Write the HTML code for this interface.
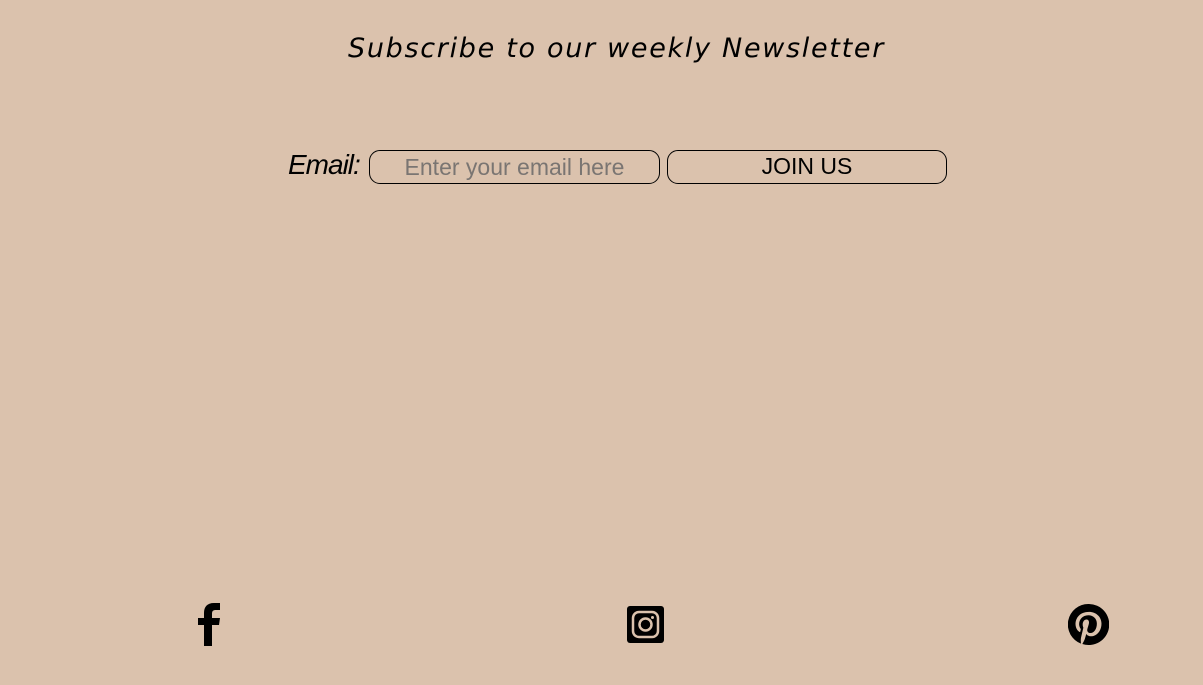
<!DOCTYPE html>
<html><head><style>
body{margin:0;width:1203px;height:685px;background:#dbc2ad;position:relative;overflow:hidden;font-family:"Liberation Sans",sans-serif}
.t{position:absolute;left:0;width:1233px;top:33px;text-align:center;font-style:italic;letter-spacing:1.7px;color:#000;font-family:"DejaVu Sans","Liberation Sans",sans-serif;font-size:27px}
.lab{position:absolute;left:288px;top:149px;font-style:italic;font-size:28px;letter-spacing:-1px}
.in{position:absolute;left:369px;top:150px;width:291px;height:34px;border:1px solid #000;border-radius:11px;box-sizing:border-box;font-size:23px;color:#7a7572;text-align:center;line-height:32px}
.bt{position:absolute;left:667px;top:150px;width:280px;height:34px;border:1px solid #000;border-radius:11px;box-sizing:border-box;font-size:23px;color:#000;text-align:center;line-height:31px}
svg{position:absolute}
</style></head><body>
<div class="t">Subscribe to our weekly Newsletter</div>
<div class="lab">Email:</div>
<div class="in">Enter your email here</div>
<div class="bt">JOIN US</div>
<svg style="left:195px;top:603px" width="28" height="43" viewBox="0 0 28 43"><path d="M9 43V22H3v-7h6V10c0-6 3-10 10-10h6v7h-4c-3 0-4 1-4 4v4h8l-1 7h-7v21z" fill="#000"/></svg>
<svg style="left:627px;top:606px" width="37" height="37" viewBox="0 0 37 37"><rect width="37" height="37" rx="3" fill="#000"/><rect x="6" y="6" width="25" height="25" rx="6" fill="none" stroke="#dbc2ad" stroke-width="2.5"/><circle cx="18.5" cy="18.5" r="6" fill="none" stroke="#dbc2ad" stroke-width="2.5"/><circle cx="25.5" cy="11.5" r="1.5" fill="#dbc2ad"/></svg>
<svg style="left:1068px;top:604px" width="41" height="41" viewBox="0 0 24 24"><path fill="#000" d="M12 0a12 12 0 0 0-4.4 23.2c-.1-.9-.2-2.4 0-3.4l1.4-6s-.4-.7-.4-1.800c0-1.7 1-2.9 2.2-2.9 1 0 1.5.8 1.5 1.7 0 1-.7 2.6-1 4-.3 1.2.6 2.2 1.8 2.2 2.1 0 3.8-2.300 3.8-5.5 0-2.9-2.1-4.9-5-4.9-3.4 0-5.4 2.6-5.4 5.2 0 1 .4 2.1.9 2.7.1.1.1.2.1.3l-.3 1.4c-.1.2-.2.3-.4.2-1.5-.7-2.4-2.9-2.4-4.600 0-3.8 2.7-7.2 7.9-7.2 4.1 0 7.3 2.9 7.3 6.9 0 4.1-2.6 7.4-6.2 7.4-1.2 0-2.4-.6-2.7-1.4l-.8 2.8c-.3 1-1 2.3-1.5 3.1A12 12 0 1 0 12 0z"/></svg>
</body></html>
